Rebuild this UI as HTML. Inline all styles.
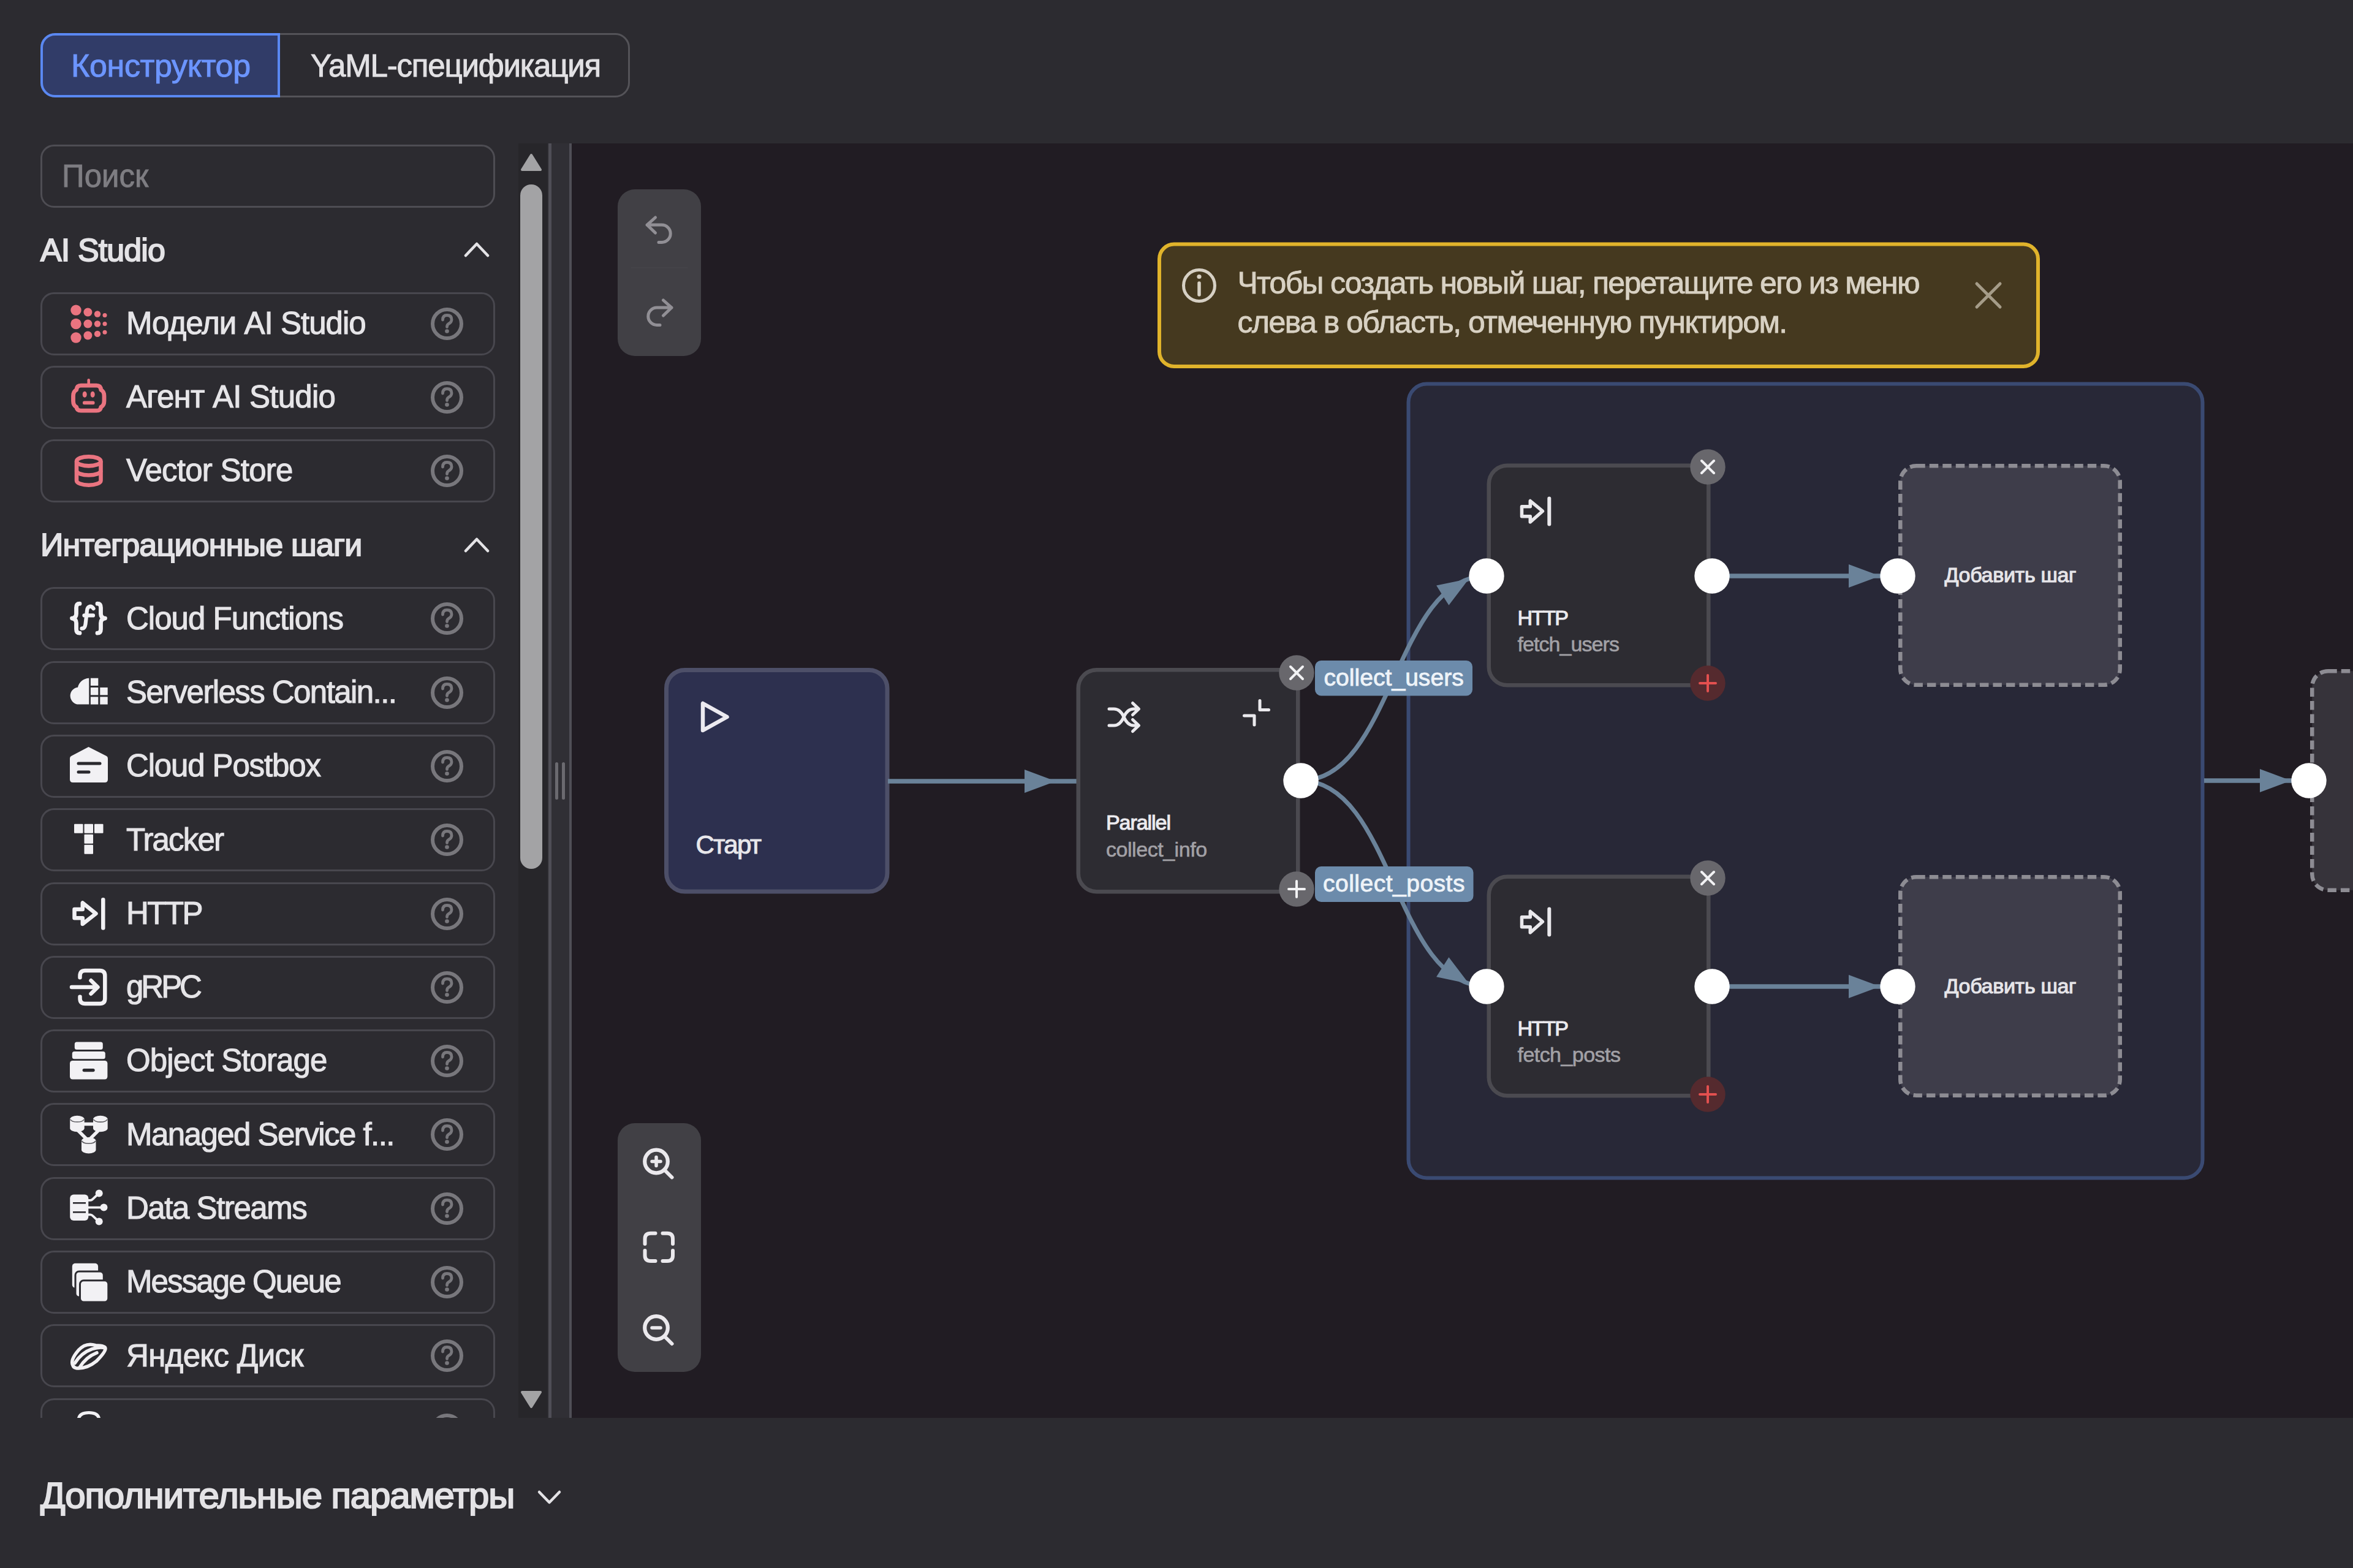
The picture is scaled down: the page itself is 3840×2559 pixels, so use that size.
<!DOCTYPE html>
<html><head><meta charset="utf-8">
<style>
*{box-sizing:border-box;margin:0;padding:0}
html,body{width:3840px;height:2559px;overflow:hidden;background:#2c2b30;font-family:"Liberation Sans",sans-serif;color:#e6e5e8}
.a{position:absolute}
.t{white-space:nowrap;line-height:1}
svg{overflow:visible}
</style></head><body>

<div class="a" style="left:66px;top:54px;width:962px;height:105px;border:3.5px solid #545358;border-radius:24px"></div>
<div class="a" style="left:66px;top:54px;width:391px;height:105px;border:4px solid #5a88f2;border-radius:24px 0 0 24px;background:#313c68"></div>
<div class="a t" style="left:116px;top:81.0px;font-size:52px;color:#6c95ff;font-weight:normal;letter-spacing:-0.34px;-webkit-text-stroke:1.0px #6c95ff;">Конструктор</div>
<div class="a t" style="left:507px;top:81.8px;font-size:51px;color:#e2e1e4;font-weight:normal;letter-spacing:-1.19px;-webkit-text-stroke:1.0px #e2e1e4;">YaML-спецификация</div>
<div class="a" style="left:0;top:234px;width:846px;height:2080px;overflow:hidden">
<div class="a" style="left:66px;top:2px;width:742px;height:103px;border:3.5px solid #4e4d53;border-radius:22px"></div>
<div class="a t" style="left:101px;top:27.8px;font-size:51px;color:#7e7d82;font-weight:normal;letter-spacing:0px;-webkit-text-stroke:0.9px #7e7d82;">Поиск</div>
<div class="a t" style="left:66px;top:147.5px;font-size:52px;color:#e4e3e6;font-weight:normal;letter-spacing:-0.89px;-webkit-text-stroke:1.9px #e4e3e6;">AI Studio</div>
<svg class="a" style="left:750px;top:146px" width="60" height="50" viewBox="750 380 60 50"><path d="M760 417 L778 398 L796 417" fill="none" stroke="#e4e3e6" stroke-width="4.5" stroke-linecap="round" stroke-linejoin="round"/></svg>
<div class="a" style="left:66px;top:242.5px;width:742px;height:103px;border:3.5px solid #48474e;border-radius:22px"></div>
<div class="a t" style="left:206px;top:267.8px;font-size:51px;color:#e6e5e8;font-weight:normal;letter-spacing:-0.96px;-webkit-text-stroke:1.1px #e6e5e8;">Модели AI Studio</div>
<svg class="a" style="left:100px;top:242.5px" width="700" height="103" viewBox="100 476.5 700 103"><circle cx="124" cy="505.6" r="8.7" fill="#ea7480"/><circle cx="124" cy="528.0" r="8.7" fill="#ea7480"/><circle cx="124" cy="550.5" r="8.7" fill="#ea7480"/><circle cx="143.4" cy="509.0" r="7" fill="#ea7480"/><circle cx="143.4" cy="528.0" r="7" fill="#ea7480"/><circle cx="143.4" cy="547.0" r="7" fill="#ea7480"/><circle cx="159" cy="512.0" r="5.2" fill="#ea7480"/><circle cx="159" cy="528.0" r="5.2" fill="#ea7480"/><circle cx="159" cy="544.4" r="5.2" fill="#ea7480"/><circle cx="171" cy="514.0" r="3.5" fill="#ea7480"/><circle cx="171" cy="528.0" r="3.5" fill="#ea7480"/><circle cx="171" cy="541.8" r="3.5" fill="#ea7480"/><circle cx="729.5" cy="528.0" r="23.5" fill="none" stroke="#78777c" stroke-width="6"/><path d="M722.5 521.5 Q722.5 514.0 729.5 514.0 Q737.0 514.0 737.0 521.0 Q737.0 525.5 732.0 528.0 Q729.5 529.5 729.5 533.0" fill="none" stroke="#78777c" stroke-width="4.8" stroke-linecap="round" stroke-linejoin="round"/><circle cx="729.5" cy="540.0" r="3.3" fill="#78777c"/></svg>
<div class="a" style="left:66px;top:362.79999999999995px;width:742px;height:103px;border:3.5px solid #48474e;border-radius:22px"></div>
<div class="a t" style="left:206px;top:388.1px;font-size:51px;color:#e6e5e8;font-weight:normal;letter-spacing:-0.76px;-webkit-text-stroke:1.1px #e6e5e8;">Агент AI Studio</div>
<svg class="a" style="left:100px;top:362.79999999999995px" width="700" height="103" viewBox="100 596.8 700 103"><line x1="144.7" y1="620.0" x2="144.7" y2="628.0" stroke="#ea7480" stroke-width="4.5" stroke-linecap="round"/><path d="M132 628.9 H157.5 Q164.3 628.9 164.8 636.0 Q170 638.5 170 646.0 V654.0 Q170 661.5 164.8 664.0 Q164.3 670.0 157.5 670.0 H132 Q125.3 670.0 124.7 664.0 Q119.5 661.5 119.5 654.0 V646.0 Q119.5 638.5 124.7 636.0 Q125.3 628.9 132 628.9 Z" fill="none" stroke="#ea7480" stroke-width="6.8" stroke-linejoin="round"/><ellipse cx="138.2" cy="643.5" rx="3.5" ry="5" fill="#ea7480"/><ellipse cx="151.2" cy="643.5" rx="3.5" ry="5" fill="#ea7480"/><rect x="135" y="654.2" width="19.5" height="5.8" rx="2.5" fill="#ea7480"/><circle cx="729.5" cy="648.3" r="23.5" fill="none" stroke="#78777c" stroke-width="6"/><path d="M722.5 641.8 Q722.5 634.3 729.5 634.3 Q737.0 634.3 737.0 641.3 Q737.0 645.8 732.0 648.3 Q729.5 649.8 729.5 653.3" fill="none" stroke="#78777c" stroke-width="4.8" stroke-linecap="round" stroke-linejoin="round"/><circle cx="729.5" cy="660.3" r="3.3" fill="#78777c"/></svg>
<div class="a" style="left:66px;top:483px;width:742px;height:103px;border:3.5px solid #48474e;border-radius:22px"></div>
<div class="a t" style="left:206px;top:508.3px;font-size:51px;color:#e6e5e8;font-weight:normal;letter-spacing:-0.75px;-webkit-text-stroke:1.1px #e6e5e8;">Vector Store</div>
<svg class="a" style="left:100px;top:483px" width="700" height="103" viewBox="100 717 700 103"><ellipse cx="144.75" cy="752.8" rx="19.75" ry="7.6" fill="none" stroke="#ea7480" stroke-width="6.6"/><path d="M125 752.8 V784.3 A19.75 7.4 0 0 0 164.5 784.3 V752.8" fill="none" stroke="#ea7480" stroke-width="6.6"/><path d="M125 768.3 A19.75 7.2 0 0 0 164.5 768.3" fill="none" stroke="#ea7480" stroke-width="6.6"/><circle cx="729.5" cy="768.5" r="23.5" fill="none" stroke="#78777c" stroke-width="6"/><path d="M722.5 762.0 Q722.5 754.5 729.5 754.5 Q737.0 754.5 737.0 761.5 Q737.0 766.0 732.0 768.5 Q729.5 770.0 729.5 773.5" fill="none" stroke="#78777c" stroke-width="4.8" stroke-linecap="round" stroke-linejoin="round"/><circle cx="729.5" cy="780.5" r="3.3" fill="#78777c"/></svg>
<div class="a t" style="left:66px;top:629.0px;font-size:52px;color:#e4e3e6;font-weight:normal;letter-spacing:-0.80px;-webkit-text-stroke:1.9px #e4e3e6;">Интеграционные шаги</div>
<svg class="a" style="left:750px;top:628px" width="60" height="50" viewBox="750 862 60 50"><path d="M760 899 L778 880 L796 899" fill="none" stroke="#e4e3e6" stroke-width="4.5" stroke-linecap="round" stroke-linejoin="round"/></svg>
<div class="a" style="left:66px;top:724.3px;width:742px;height:103px;border:3.5px solid #48474e;border-radius:22px"></div>
<div class="a t" style="left:206px;top:749.6px;font-size:51px;color:#e6e5e8;font-weight:normal;letter-spacing:-0.97px;-webkit-text-stroke:1.1px #e6e5e8;">Cloud Functions</div>
<svg class="a" style="left:100px;top:724.3px" width="700" height="103" viewBox="100 958.3 700 103"><path d="M130 985.5 Q124.5 985.5 124.5 992.0 V1002.0 Q124.5 1008.5 117.5 1009.5 Q124.5 1010.5 124.5 1017.0 V1027.0 Q124.5 1033.5 130 1033.5" fill="none" stroke="#f2f1f4" stroke-width="6.8" stroke-linecap="round" stroke-linejoin="round"/><path d="M159 985.5 Q164.5 985.5 164.5 992.0 V1002.0 Q164.5 1008.5 171.5 1009.5 Q164.5 1010.5 164.5 1017.0 V1027.0 Q164.5 1033.5 159 1033.5" fill="none" stroke="#f2f1f4" stroke-width="6.8" stroke-linecap="round" stroke-linejoin="round"/><path d="M152.5 993.5 Q150 989.5 146.5 990.0 Q142.5 991.0 142 997.0 L139.5 1019.0 Q138.5 1026.5 133.5 1026.0" fill="none" stroke="#f2f1f4" stroke-width="6.2" stroke-linecap="round"/><line x1="137.5" y1="1004.7" x2="152" y2="1004.7" stroke="#f2f1f4" stroke-width="6.2" stroke-linecap="round"/><circle cx="729.5" cy="1009.8" r="23.5" fill="none" stroke="#78777c" stroke-width="6"/><path d="M722.5 1003.3 Q722.5 995.8 729.5 995.8 Q737.0 995.8 737.0 1002.8 Q737.0 1007.3 732.0 1009.8 Q729.5 1011.3 729.5 1014.8" fill="none" stroke="#78777c" stroke-width="4.8" stroke-linecap="round" stroke-linejoin="round"/><circle cx="729.5" cy="1021.8" r="3.3" fill="#78777c"/></svg>
<div class="a" style="left:66px;top:844.5999999999999px;width:742px;height:103px;border:3.5px solid #48474e;border-radius:22px"></div>
<div class="a t" style="left:206px;top:869.9px;font-size:51px;color:#e6e5e8;font-weight:normal;letter-spacing:-1.57px;-webkit-text-stroke:1.1px #e6e5e8;">Serverless Contain...</div>
<svg class="a" style="left:100px;top:844.5999999999999px" width="700" height="103" viewBox="100 1078.6 700 103"><path d="M145.3 1149.2 H128.5 A14 14 0 0 1 127 1121.3 A19.2 19.2 0 0 1 145.3 1106.3 Z" fill="#f2f1f4"/><rect x="147.9" y="1106.3" width="12.4" height="12.3" fill="#f2f1f4"/><rect x="147.9" y="1121.6" width="12.4" height="12.3" fill="#f2f1f4"/><rect x="163.3" y="1121.6" width="12.4" height="12.3" fill="#f2f1f4"/><rect x="147.9" y="1136.9" width="12.4" height="12.3" fill="#f2f1f4"/><rect x="163.3" y="1136.9" width="12.4" height="12.3" fill="#f2f1f4"/><circle cx="729.5" cy="1130.1" r="23.5" fill="none" stroke="#78777c" stroke-width="6"/><path d="M722.5 1123.6 Q722.5 1116.1 729.5 1116.1 Q737.0 1116.1 737.0 1123.1 Q737.0 1127.6 732.0 1130.1 Q729.5 1131.6 729.5 1135.1" fill="none" stroke="#78777c" stroke-width="4.8" stroke-linecap="round" stroke-linejoin="round"/><circle cx="729.5" cy="1142.1" r="3.3" fill="#78777c"/></svg>
<div class="a" style="left:66px;top:964.9000000000001px;width:742px;height:103px;border:3.5px solid #48474e;border-radius:22px"></div>
<div class="a t" style="left:206px;top:990.2px;font-size:51px;color:#e6e5e8;font-weight:normal;letter-spacing:-1.15px;-webkit-text-stroke:1.1px #e6e5e8;">Cloud Postbox</div>
<svg class="a" style="left:100px;top:964.9000000000001px" width="700" height="103" viewBox="100 1198.9 700 103"><path d="M144.5 1219.0 L174 1234.0 Q176 1235.0 176 1238.0 V1272.0 Q176 1277.0 171 1277.0 H119 Q114 1277.0 114 1272.0 V1238.0 Q114 1235.0 116 1234.0 Z" fill="#f2f1f4"/><line x1="128" y1="1246.0" x2="163" y2="1246.0" stroke="#2a292e" stroke-width="5" stroke-linecap="round"/><line x1="128" y1="1260.0" x2="145" y2="1260.0" stroke="#2a292e" stroke-width="5" stroke-linecap="round"/><circle cx="729.5" cy="1250.4" r="23.5" fill="none" stroke="#78777c" stroke-width="6"/><path d="M722.5 1243.9 Q722.5 1236.4 729.5 1236.4 Q737.0 1236.4 737.0 1243.4 Q737.0 1247.9 732.0 1250.4 Q729.5 1251.9 729.5 1255.4" fill="none" stroke="#78777c" stroke-width="4.8" stroke-linecap="round" stroke-linejoin="round"/><circle cx="729.5" cy="1262.4" r="3.3" fill="#78777c"/></svg>
<div class="a" style="left:66px;top:1085.2px;width:742px;height:103px;border:3.5px solid #48474e;border-radius:22px"></div>
<div class="a t" style="left:206px;top:1110.5px;font-size:51px;color:#e6e5e8;font-weight:normal;letter-spacing:-1.83px;-webkit-text-stroke:1.1px #e6e5e8;">Tracker</div>
<svg class="a" style="left:100px;top:1085.2px" width="700" height="103" viewBox="100 1319.2 700 103"><rect x="121" y="1345.0" width="14.5" height="15" rx="1" fill="#f2f1f4"/><rect x="137.5" y="1345.0" width="14.5" height="15" rx="1" fill="#f2f1f4"/><rect x="154" y="1345.0" width="14.5" height="15" rx="1" fill="#f2f1f4"/><rect x="137.5" y="1362.0" width="14.5" height="15" rx="1" fill="#f2f1f4"/><rect x="137.5" y="1379.0" width="14.5" height="15" rx="1" fill="#f2f1f4"/><circle cx="729.5" cy="1370.7" r="23.5" fill="none" stroke="#78777c" stroke-width="6"/><path d="M722.5 1364.2 Q722.5 1356.7 729.5 1356.7 Q737.0 1356.7 737.0 1363.7 Q737.0 1368.2 732.0 1370.7 Q729.5 1372.2 729.5 1375.7" fill="none" stroke="#78777c" stroke-width="4.8" stroke-linecap="round" stroke-linejoin="round"/><circle cx="729.5" cy="1382.7" r="3.3" fill="#78777c"/></svg>
<div class="a" style="left:66px;top:1205.5px;width:742px;height:103px;border:3.5px solid #48474e;border-radius:22px"></div>
<div class="a t" style="left:206px;top:1230.8px;font-size:51px;color:#e6e5e8;font-weight:normal;letter-spacing:-2.53px;-webkit-text-stroke:1.1px #e6e5e8;">HTTP</div>
<svg class="a" style="left:100px;top:1205.5px" width="700" height="103" viewBox="100 1439.5 700 103"><path d="M134.8 1483.5 H121.5 V1497.7 H134.8 V1507.5 L156.5 1490.5 L134.8 1473.0 Z" fill="none" stroke="#f2f1f4" stroke-width="6.5" stroke-linejoin="round"/><line x1="168.3" y1="1467.7" x2="168.3" y2="1514.0" stroke="#f2f1f4" stroke-width="6.5" stroke-linecap="round"/><circle cx="729.5" cy="1491.0" r="23.5" fill="none" stroke="#78777c" stroke-width="6"/><path d="M722.5 1484.5 Q722.5 1477.0 729.5 1477.0 Q737.0 1477.0 737.0 1484.0 Q737.0 1488.5 732.0 1491.0 Q729.5 1492.5 729.5 1496.0" fill="none" stroke="#78777c" stroke-width="4.8" stroke-linecap="round" stroke-linejoin="round"/><circle cx="729.5" cy="1503.0" r="3.3" fill="#78777c"/></svg>
<div class="a" style="left:66px;top:1325.8px;width:742px;height:103px;border:3.5px solid #48474e;border-radius:22px"></div>
<div class="a t" style="left:206px;top:1351.1px;font-size:51px;color:#e6e5e8;font-weight:normal;letter-spacing:-4.03px;-webkit-text-stroke:1.1px #e6e5e8;">gRPC</div>
<svg class="a" style="left:100px;top:1325.8px" width="700" height="103" viewBox="100 1559.8 700 103"><path d="M130.5 1595.0 V1592.5 Q130.5 1583.8 139 1583.8 H162.8 Q171.3 1583.8 171.3 1592.3 V1629.4 Q171.3 1637.9 162.8 1637.9 H139 Q130.5 1637.9 130.5 1629.4 V1626.5" fill="none" stroke="#f2f1f4" stroke-width="6.5" stroke-linecap="round"/><line x1="117" y1="1610.8" x2="157" y2="1610.8" stroke="#f2f1f4" stroke-width="6.5" stroke-linecap="round"/><path d="M148.5 1600.0 L159.5 1610.8 L148.5 1621.6" fill="none" stroke="#f2f1f4" stroke-width="6.5" stroke-linecap="round" stroke-linejoin="round"/><circle cx="729.5" cy="1611.3" r="23.5" fill="none" stroke="#78777c" stroke-width="6"/><path d="M722.5 1604.8 Q722.5 1597.3 729.5 1597.3 Q737.0 1597.3 737.0 1604.3 Q737.0 1608.8 732.0 1611.3 Q729.5 1612.8 729.5 1616.3" fill="none" stroke="#78777c" stroke-width="4.8" stroke-linecap="round" stroke-linejoin="round"/><circle cx="729.5" cy="1623.3" r="3.3" fill="#78777c"/></svg>
<div class="a" style="left:66px;top:1446.1px;width:742px;height:103px;border:3.5px solid #48474e;border-radius:22px"></div>
<div class="a t" style="left:206px;top:1471.4px;font-size:51px;color:#e6e5e8;font-weight:normal;letter-spacing:-0.91px;-webkit-text-stroke:1.1px #e6e5e8;">Object Storage</div>
<svg class="a" style="left:100px;top:1446.1px" width="700" height="103" viewBox="100 1680.1 700 103"><rect x="121.8" y="1700.7" width="46" height="12.5" rx="3.5" fill="#f2f1f4"/><rect x="117.8" y="1716.0" width="54" height="12.3" rx="3.5" fill="#f2f1f4"/><rect x="114" y="1731.0" width="61.4" height="30.7" rx="4.5" fill="#f2f1f4"/><rect x="134.6" y="1744.0" width="20.1" height="5.4" rx="2.7" fill="#2a292e"/><circle cx="729.5" cy="1731.6" r="23.5" fill="none" stroke="#78777c" stroke-width="6"/><path d="M722.5 1725.1 Q722.5 1717.6 729.5 1717.6 Q737.0 1717.6 737.0 1724.6 Q737.0 1729.1 732.0 1731.6 Q729.5 1733.1 729.5 1736.6" fill="none" stroke="#78777c" stroke-width="4.8" stroke-linecap="round" stroke-linejoin="round"/><circle cx="729.5" cy="1743.6" r="3.3" fill="#78777c"/></svg>
<div class="a" style="left:66px;top:1566.4px;width:742px;height:103px;border:3.5px solid #48474e;border-radius:22px"></div>
<div class="a t" style="left:206px;top:1591.7px;font-size:51px;color:#e6e5e8;font-weight:normal;letter-spacing:-1.54px;-webkit-text-stroke:1.1px #e6e5e8;">Managed Service f...</div>
<svg class="a" style="left:100px;top:1566.4px" width="700" height="103" viewBox="100 1800.4 700 103"><path d="M136 1835.0 H154 M127 1845.0 L141 1859.0 M161 1845.0 L147 1859.0" fill="none" stroke="#f2f1f4" stroke-width="5.5"/><path d="M114.2 1827.2 A11.749999999999993 6 0 0 1 137.7 1827.2 V1841.7 A11.749999999999993 6 0 0 1 114.2 1841.7 Z" fill="#f2f1f4"/><path d="M114.7 1827.2 A11.749999999999993 6 0 0 0 137.2 1827.2" fill="none" stroke="#5a595e" stroke-width="1.6"/><path d="M152 1827.2 A11.849999999999994 6 0 0 1 175.7 1827.2 V1841.7 A11.849999999999994 6 0 0 1 152 1841.7 Z" fill="#f2f1f4"/><path d="M152.5 1827.2 A11.849999999999994 6 0 0 0 175.2 1827.2" fill="none" stroke="#5a595e" stroke-width="1.6"/><path d="M133 1862.4 A11.75 6 0 0 1 156.5 1862.4 V1877.0 A11.75 6 0 0 1 133 1877.0 Z" fill="#f2f1f4"/><path d="M133.5 1862.4 A11.75 6 0 0 0 156.0 1862.4" fill="none" stroke="#5a595e" stroke-width="1.6"/><circle cx="729.5" cy="1851.9" r="23.5" fill="none" stroke="#78777c" stroke-width="6"/><path d="M722.5 1845.4 Q722.5 1837.9 729.5 1837.9 Q737.0 1837.9 737.0 1844.9 Q737.0 1849.4 732.0 1851.9 Q729.5 1853.4 729.5 1856.9" fill="none" stroke="#78777c" stroke-width="4.8" stroke-linecap="round" stroke-linejoin="round"/><circle cx="729.5" cy="1863.9" r="3.3" fill="#78777c"/></svg>
<div class="a" style="left:66px;top:1686.7px;width:742px;height:103px;border:3.5px solid #48474e;border-radius:22px"></div>
<div class="a t" style="left:206px;top:1712.0px;font-size:51px;color:#e6e5e8;font-weight:normal;letter-spacing:-1.46px;-webkit-text-stroke:1.1px #e6e5e8;">Data Streams</div>
<svg class="a" style="left:100px;top:1686.7px" width="700" height="103" viewBox="100 1920.7 700 103"><rect x="114.2" y="1949.3" width="30.1" height="42.4" rx="6" fill="#f2f1f4"/><line x1="119" y1="1963.0" x2="140" y2="1963.0" stroke="#2a292e" stroke-width="2.6"/><line x1="119" y1="1978.0" x2="140" y2="1978.0" stroke="#2a292e" stroke-width="2.6"/><path d="M143 1958.5 H147.5 Q149.5 1958.5 151.5 1956.5 L161 1947.5 M143 1970.3 H169 M143 1982.0 H147.5 Q149.5 1982.0 151.5 1984.0 L161 1993.0" fill="none" stroke="#f2f1f4" stroke-width="3.8"/><circle cx="161.7" cy="1947.3" r="6" fill="#f2f1f4"/><circle cx="169.5" cy="1970.3" r="6" fill="#f2f1f4"/><circle cx="161.7" cy="1993.3" r="6" fill="#f2f1f4"/><circle cx="729.5" cy="1972.2" r="23.5" fill="none" stroke="#78777c" stroke-width="6"/><path d="M722.5 1965.7 Q722.5 1958.2 729.5 1958.2 Q737.0 1958.2 737.0 1965.2 Q737.0 1969.7 732.0 1972.2 Q729.5 1973.7 729.5 1977.2" fill="none" stroke="#78777c" stroke-width="4.8" stroke-linecap="round" stroke-linejoin="round"/><circle cx="729.5" cy="1984.2" r="3.3" fill="#78777c"/></svg>
<div class="a" style="left:66px;top:1807.0px;width:742px;height:103px;border:3.5px solid #48474e;border-radius:22px"></div>
<div class="a t" style="left:206px;top:1832.3px;font-size:51px;color:#e6e5e8;font-weight:normal;letter-spacing:-1.88px;-webkit-text-stroke:1.1px #e6e5e8;">Message Queue</div>
<svg class="a" style="left:100px;top:1807.0px" width="700" height="103" viewBox="100 2041.0 700 103"><rect x="117.8" y="2061.7" width="42.3" height="40" rx="5" fill="#f2f1f4"/><rect x="123" y="2075.0" width="46.3" height="42" rx="6" fill="#f2f1f4" stroke="#2c2b30" stroke-width="3"/><rect x="130.5" y="2089.8" width="46.3" height="35.2" rx="6" fill="#f2f1f4" stroke="#2c2b30" stroke-width="3"/><circle cx="729.5" cy="2092.5" r="23.5" fill="none" stroke="#78777c" stroke-width="6"/><path d="M722.5 2086.0 Q722.5 2078.5 729.5 2078.5 Q737.0 2078.5 737.0 2085.5 Q737.0 2090.0 732.0 2092.5 Q729.5 2094.0 729.5 2097.5" fill="none" stroke="#78777c" stroke-width="4.8" stroke-linecap="round" stroke-linejoin="round"/><circle cx="729.5" cy="2104.5" r="3.3" fill="#78777c"/></svg>
<div class="a" style="left:66px;top:1927.3000000000002px;width:742px;height:103px;border:3.5px solid #48474e;border-radius:22px"></div>
<div class="a t" style="left:206px;top:1952.6px;font-size:51px;color:#e6e5e8;font-weight:normal;letter-spacing:-0.69px;-webkit-text-stroke:1.1px #e6e5e8;">Яндекс Диск</div>
<svg class="a" style="left:100px;top:1927.3000000000002px" width="700" height="103" viewBox="100 2161.3 700 103"><path d="M119 2229.0 Q114 2220.0 128 2204.0 Q140 2191.0 156 2196.0 Q172 2196.0 172 2201.0 Q172 2207.0 157 2222.0 Q141 2235.0 124 2233.0 Q120 2232.0 119 2229.0 Z" fill="none" stroke="#f2f1f4" stroke-width="5.5" stroke-linejoin="round"/><path d="M122 2225.0 Q133 2208.0 150 2202.0 Q162 2198.0 171 2200.0" fill="none" stroke="#f2f1f4" stroke-width="5.5" stroke-linecap="round"/><path d="M130 2232.0 Q140 2215.0 158 2208.0" fill="none" stroke="#f2f1f4" stroke-width="5.5" stroke-linecap="round"/><circle cx="729.5" cy="2212.8" r="23.5" fill="none" stroke="#78777c" stroke-width="6"/><path d="M722.5 2206.3 Q722.5 2198.8 729.5 2198.8 Q737.0 2198.8 737.0 2205.8 Q737.0 2210.3 732.0 2212.8 Q729.5 2214.3 729.5 2217.8" fill="none" stroke="#78777c" stroke-width="4.8" stroke-linecap="round" stroke-linejoin="round"/><circle cx="729.5" cy="2224.8" r="3.3" fill="#78777c"/></svg>
<div class="a" style="left:66px;top:2047.6px;width:742px;height:103px;border:3.5px solid #48474e;border-radius:22px"></div>
<div class="a t" style="left:206px;top:2072.9px;font-size:51px;color:#e6e5e8;font-weight:normal;letter-spacing:-1px;-webkit-text-stroke:1.1px #e6e5e8;"></div>
<svg class="a" style="left:100px;top:2047.6px" width="700" height="103" viewBox="100 2281.6 700 103"><path d="M128 2318.0 Q128 2305.0 145 2305.0 Q162 2305.0 162 2318.0" fill="none" stroke="#f2f1f4" stroke-width="5"/><circle cx="729.5" cy="2333.1" r="23.5" fill="none" stroke="#78777c" stroke-width="6"/><path d="M722.5 2326.6 Q722.5 2319.1 729.5 2319.1 Q737.0 2319.1 737.0 2326.1 Q737.0 2330.6 732.0 2333.1 Q729.5 2334.6 729.5 2338.1" fill="none" stroke="#78777c" stroke-width="4.8" stroke-linecap="round" stroke-linejoin="round"/><circle cx="729.5" cy="2345.1" r="3.3" fill="#78777c"/></svg>
</div>
<div class="a" style="left:846px;top:234px;width:47px;height:2080px;background:#27262a"></div>
<div class="a" style="left:849px;top:301px;width:36px;height:1117px;border-radius:18px;background:#a3a3a5"></div>
<svg class="a" style="left:849px;top:250px" width="36" height="30" viewBox="849 250 36 30"><path d="M867 253 L882 277 L852 277 Z" fill="#a3a3a5" stroke="#a3a3a5" stroke-width="4" stroke-linejoin="round"/></svg>
<svg class="a" style="left:849px;top:2270px" width="36" height="30" viewBox="849 2270 36 30"><path d="M867 2296 L882 2272 L852 2272 Z" fill="#a3a3a5" stroke="#a3a3a5" stroke-width="4" stroke-linejoin="round"/></svg>
<div class="a" style="left:899px;top:234px;width:30px;height:2080px;background:#302f35"></div>
<div class="a" style="left:895px;top:234px;width:4.5px;height:2080px;background:#4f4e56"></div>
<div class="a" style="left:928.5px;top:234px;width:4.5px;height:2080px;background:#4f4e56"></div>
<div class="a" style="left:905.5px;top:1244px;width:5px;height:61px;background:#6b6a70;border-radius:2.5px"></div>
<div class="a" style="left:917px;top:1244px;width:5px;height:61px;background:#6b6a70;border-radius:2.5px"></div>
<div class="a" style="left:933px;top:234px;width:2907px;height:2080px;background:#211c23;overflow:hidden">
<svg class="a" style="left:0;top:0" width="2907" height="2080" viewBox="933 234 2907 2080">
<rect x="2298.5" y="626.5" width="1296.0" height="1296.0" rx="30" fill="#282837" stroke="#3a4a72" stroke-width="6" /><rect x="1892.0" y="398.5" width="1434" height="199.5" rx="24" fill="#45391f" stroke="#e0b32b" stroke-width="6" /><circle cx="1957" cy="466" r="25.5" fill="none" stroke="#d6d0c4" stroke-width="5"/><line x1="1957" y1="462" x2="1957" y2="481" stroke="#d6d0c4" stroke-width="5.5" stroke-linecap="round"/><circle cx="1957" cy="451.5" r="3.6" fill="#d6d0c4"/><path d="M3226 463 L3264 501 M3264 463 L3226 501" stroke="#a59c88" stroke-width="5" stroke-linecap="round"/><rect x="1008" y="309" width="136" height="272" rx="28" fill="#414045"/><line x1="1030" y1="437" x2="1122" y2="437" stroke="#444348" stroke-width="2"/><path d="M1069.5 355 L1056 367 L1069.5 380 M1056 367 H1080 A14.2 14.2 0 0 1 1080 395.4 H1075" fill="none" stroke="#918f95" stroke-width="5" stroke-linecap="round" stroke-linejoin="round"/><path d="M1082.5 490 L1096 502 L1082.5 515 M1096 502 H1072 A14.2 14.2 0 0 0 1072 530.4 H1077" fill="none" stroke="#918f95" stroke-width="5" stroke-linecap="round" stroke-linejoin="round"/><rect x="1008" y="1833" width="136" height="406" rx="28" fill="#414045"/><circle cx="1071" cy="1895.5" r="18.8" fill="none" stroke="#ebe9ed" stroke-width="6.2"/><path d="M1085 1910 L1096.5 1921.5" stroke="#ebe9ed" stroke-width="6" stroke-linecap="round"/><path d="M1071 1888.5 V1902.5 M1064 1895.5 H1078" stroke="#ebe9ed" stroke-width="5.5" stroke-linecap="round"/><path d="M1052.5 2030 V2022 Q1052.5 2012.8 1062 2012.8 H1069.5 M1081.5 2012.8 H1089 Q1098 2012.8 1098 2022 V2030 M1098 2041 V2049 Q1098 2058 1089 2058 H1081.5 M1069.5 2058 H1062 Q1052.5 2058 1052.5 2049 V2041" fill="none" stroke="#ebe9ed" stroke-width="6" stroke-linecap="round"/><circle cx="1071" cy="2167" r="18.8" fill="none" stroke="#ebe9ed" stroke-width="6.2"/><path d="M1085 2181.5 L1096.5 2193" stroke="#ebe9ed" stroke-width="6" stroke-linecap="round"/><path d="M1064 2167 H1078" stroke="#ebe9ed" stroke-width="5.5" stroke-linecap="round"/><rect x="1087.5" y="1093.5" width="360.5" height="361.5" rx="30" fill="#2d304f" stroke="#4d4f68" stroke-width="7" /><path d="M1147 1148 V1192 L1186.5 1170 Z" fill="none" stroke="#eceaf0" stroke-width="6.5" stroke-linejoin="round"/><line x1="1449" y1="1275" x2="1757" y2="1275" stroke="#6a8299" stroke-width="7.5"/><path d="M1723.0 1275.0 L1672.0 1294.0 L1672.0 1256.0 Z" fill="#6a8299"/><rect x="1759.75" y="1093.25" width="358.5" height="362.0" rx="30" fill="#2d2c32" stroke="#4b4a50" stroke-width="6.5" /><path d="M1810 1157 H1818 Q1828 1157 1834 1170 Q1840 1184 1850 1184 H1858 M1810 1184 H1818 Q1828 1184 1834 1170 Q1840 1157 1850 1157 H1858 M1848.5 1147.5 L1858.5 1157 L1848.5 1166.5 M1848.5 1174.5 L1858.5 1184 L1848.5 1193.5" fill="none" stroke="#ebeaee" stroke-width="5" stroke-linecap="round" stroke-linejoin="round"/><path d="M2056 1143.5 V1158.5 H2070.5 M2030.5 1168 H2047 V1183" fill="none" stroke="#ebeaee" stroke-width="5" stroke-linecap="round" stroke-linejoin="round"/><path d="M2123 1274 C2273 1274 2276 940 2426 940" fill="none" stroke="#6a8299" stroke-width="7"/><path d="M2397.3 944.4 L2364.4 987.7 L2344.1 955.6 Z" fill="#6a8299"/><path d="M2123 1274 C2273 1274 2276 1610 2426 1610" fill="none" stroke="#6a8299" stroke-width="7"/><path d="M2397.3 1605.6 L2344.1 1594.3 L2364.4 1562.2 Z" fill="#6a8299"/><rect x="2429.75" y="759.75" width="358.5" height="358.5" rx="30" fill="#2d2c32" stroke="#4b4a50" stroke-width="6.5" /><rect x="2429.75" y="1430.75" width="358.5" height="357.5" rx="30" fill="#2d2c32" stroke="#4b4a50" stroke-width="6.5" /><g transform="translate(0 0)"><path d="M2497.3 826.8 H2483.5 V842.8 H2497.3 V852 L2517.4 834.2 L2497.3 817.5 Z" fill="none" stroke="#e9e8ec" stroke-width="5.5" stroke-linejoin="round"/><line x1="2528.3" y1="813.5" x2="2528.3" y2="855.5" stroke="#e9e8ec" stroke-width="6" stroke-linecap="round"/></g><g transform="translate(0 670)"><path d="M2497.3 826.8 H2483.5 V842.8 H2497.3 V852 L2517.4 834.2 L2497.3 817.5 Z" fill="none" stroke="#e9e8ec" stroke-width="5.5" stroke-linejoin="round"/><line x1="2528.3" y1="813.5" x2="2528.3" y2="855.5" stroke="#e9e8ec" stroke-width="6" stroke-linecap="round"/></g><rect x="3101.25" y="760.25" width="358.5" height="357.5" rx="26" fill="#3e3d4a" stroke="#8d8c93" stroke-width="6.5" stroke-dasharray="14.5 7"/><rect x="3101.25" y="1431.25" width="358.5" height="356.5" rx="26" fill="#3e3d4a" stroke="#8d8c93" stroke-width="6.5" stroke-dasharray="14.5 7"/><rect x="3773.25" y="1095.25" width="123.5" height="357.5" rx="26" fill="#36333a" stroke="#8d8c93" stroke-width="6.5" stroke-dasharray="14.5 7"/><line x1="2794" y1="940" x2="3097" y2="940" stroke="#6a8299" stroke-width="7.5"/><path d="M3068.0 940.0 L3017.0 959.0 L3017.0 921.0 Z" fill="#6a8299"/><line x1="2794" y1="1610" x2="3097" y2="1610" stroke="#6a8299" stroke-width="7.5"/><path d="M3068.0 1610.0 L3017.0 1629.0 L3017.0 1591.0 Z" fill="#6a8299"/><line x1="3597" y1="1274" x2="3770" y2="1274" stroke="#6a8299" stroke-width="7.5"/><path d="M3739.0 1274.0 L3688.0 1293.0 L3688.0 1255.0 Z" fill="#6a8299"/><circle cx="2123" cy="1274" r="28.7" fill="#ffffff"/><circle cx="2426" cy="940" r="28.7" fill="#ffffff"/><circle cx="2794" cy="940" r="28.7" fill="#ffffff"/><circle cx="3097" cy="940" r="28.7" fill="#ffffff"/><circle cx="2426" cy="1610" r="28.7" fill="#ffffff"/><circle cx="2794" cy="1610" r="28.7" fill="#ffffff"/><circle cx="3097" cy="1610" r="28.7" fill="#ffffff"/><circle cx="3768" cy="1274" r="28.7" fill="#ffffff"/><circle cx="2116" cy="1098" r="28.7" fill="#68676c"/><path d="M2106 1088 L2126 1108 M2126 1088 L2106 1108" stroke="#f2f2f4" stroke-width="4" stroke-linecap="round"/><circle cx="2116" cy="1451" r="28.7" fill="#68676c"/><path d="M2116 1438 V1464 M2103 1451 H2129" stroke="#f2f2f4" stroke-width="4" stroke-linecap="round"/><circle cx="2787" cy="762" r="28.7" fill="#68676c"/><path d="M2777 752 L2797 772 M2797 752 L2777 772" stroke="#f2f2f4" stroke-width="4" stroke-linecap="round"/><circle cx="2787" cy="1115" r="28.7" fill="#552a2e"/><path d="M2787 1102 V1128 M2774 1115 H2800" stroke="#e3504f" stroke-width="4" stroke-linecap="round"/><circle cx="2787" cy="1433" r="28.7" fill="#68676c"/><path d="M2777 1423 L2797 1443 M2797 1423 L2777 1443" stroke="#f2f2f4" stroke-width="4" stroke-linecap="round"/><circle cx="2787" cy="1786" r="28.7" fill="#552a2e"/><path d="M2787 1773 V1799 M2774 1786 H2800" stroke="#e3504f" stroke-width="4" stroke-linecap="round"/><rect x="2146" y="1078" width="257" height="57.5" rx="10" fill="#6c8bab"/><rect x="2146" y="1414" width="258.5" height="58" rx="10" fill="#6c8bab"/>
</svg>
</div>
<div class="a t" style="left:1135.5px;top:1358.0px;font-size:42px;color:#e8e7eb;font-weight:normal;letter-spacing:-1.66px;-webkit-text-stroke:1.0px #e8e7eb;">Старт</div>
<div class="a t" style="left:1805px;top:1325.2px;font-size:34px;color:#ebeaee;font-weight:normal;letter-spacing:-1.06px;-webkit-text-stroke:1.1px #ebeaee;">Parallel</div>
<div class="a t" style="left:1805px;top:1369.2px;font-size:34px;color:#a2a1a6;font-weight:normal;letter-spacing:-0.46px;-webkit-text-stroke:0.6px #a2a1a6;">collect_info</div>
<div class="a t" style="left:2476.5px;top:990.9px;font-size:34px;color:#ebeaee;font-weight:normal;letter-spacing:-1.78px;-webkit-text-stroke:1.1px #ebeaee;">HTTP</div>
<div class="a t" style="left:2476.5px;top:1033.6px;font-size:34px;color:#a2a1a6;font-weight:normal;letter-spacing:-0.93px;-webkit-text-stroke:0.6px #a2a1a6;">fetch_users</div>
<div class="a t" style="left:2476.5px;top:1661.2px;font-size:34px;color:#ebeaee;font-weight:normal;letter-spacing:-1.78px;-webkit-text-stroke:1.1px #ebeaee;">HTTP</div>
<div class="a t" style="left:2476.5px;top:1704.2px;font-size:34px;color:#a2a1a6;font-weight:normal;letter-spacing:-0.55px;-webkit-text-stroke:0.6px #a2a1a6;">fetch_posts</div>
<div class="a t" style="left:3173.5px;top:921.2px;font-size:34px;color:#e6e5e9;font-weight:normal;letter-spacing:-0.31px;-webkit-text-stroke:1.1px #e6e5e9;">Добавить шаг</div>
<div class="a t" style="left:3173.5px;top:1592.2px;font-size:34px;color:#e6e5e9;font-weight:normal;letter-spacing:-0.31px;-webkit-text-stroke:1.1px #e6e5e9;">Добавить шаг</div>
<div class="a t" style="left:2160.5px;top:1086.0px;font-size:39px;color:#eef3f8;font-weight:normal;letter-spacing:0.05px;-webkit-text-stroke:0.9px #eef3f8;">collect_users</div>
<div class="a t" style="left:2159px;top:1422.0px;font-size:39px;color:#eef3f8;font-weight:normal;letter-spacing:0.50px;-webkit-text-stroke:0.9px #eef3f8;">collect_posts</div>
<div class="a t" style="left:2019.4px;top:437.3px;font-size:50px;color:#d8d1c3;font-weight:normal;letter-spacing:-1.73px;-webkit-text-stroke:0.9px #d8d1c3;">Чтобы создать новый шаг, перетащите его из меню</div>
<div class="a t" style="left:2019.4px;top:501.1px;font-size:50px;color:#d8d1c3;font-weight:normal;letter-spacing:-1.56px;-webkit-text-stroke:0.9px #d8d1c3;">слева в область, отмеченную пунктиром.</div>
<div class="a t" style="left:66px;top:2411.2px;font-size:60px;color:#e4e3e6;font-weight:normal;letter-spacing:-1.15px;-webkit-text-stroke:2.1px #e4e3e6;">Дополнительные параметры</div>
<svg class="a" style="left:870px;top:2425px" width="50" height="40" viewBox="870 2425 50 40"><path d="M880 2435 L896.5 2452 L913 2435" fill="none" stroke="#e4e3e6" stroke-width="4.5" stroke-linecap="round" stroke-linejoin="round"/></svg>
</body></html>
